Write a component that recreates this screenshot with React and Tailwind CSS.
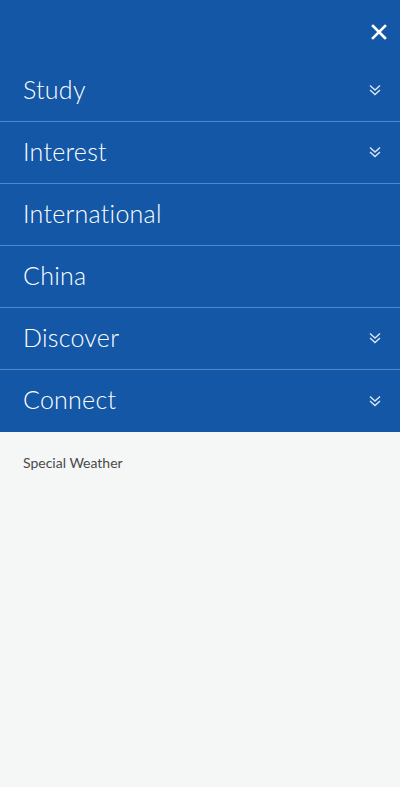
import React from 'react';

const items = [
  { label: 'Study', sub: true },
  { label: 'Interest', sub: true },
  { label: 'International', sub: false },
  { label: 'China', sub: false },
  { label: 'Discover', sub: true },
  { label: 'Connect', sub: true },
];

function DoubleChevron() {
  return (
    <svg width="14" height="12" viewBox="0 0 14 12" fill="none" stroke="currentColor" strokeWidth="1.4">
      <path d="M2 1.5l5 4.5 5-4.5" />
      <path d="M2 6l5 4.5 5-4.5" />
    </svg>
  );
}

export default function App() {
  return (
    <div className="min-h-[787px] bg-[#f5f7f6] font-['Lato',sans-serif]">
      <nav className="bg-[#1357a6] text-white">
        <div className="h-[60px] flex items-start justify-end pr-[8px] pt-[19px]">
          <button className="w-[26px] h-[26px] flex items-center justify-center">
            <svg width="16" height="16" viewBox="0 0 16 16" stroke="currentColor" strokeWidth="2.6" strokeLinecap="square">
              <path d="M2 2l12 12M14 2L2 14" />
            </svg>
          </button>
        </div>
        {items.map((it) => (
          <div key={it.label} className="h-[62px] flex items-center justify-between pl-[23px] pr-[18px] border-b border-[#4f87cf] last:border-b-0">
            <span className="text-[25px] font-light tracking-[0.25px] -mt-[2px]">{it.label}</span>
            {it.sub && <span className="text-[#dbe7f5] -mt-[1px]"><DoubleChevron /></span>}
          </div>
        ))}
      </nav>
      <div className="px-[23px] pt-[20px]">
        <p className="text-[14px] text-[#4a4a4a]">Special Weather</p>
      </div>
    </div>
  );
}
